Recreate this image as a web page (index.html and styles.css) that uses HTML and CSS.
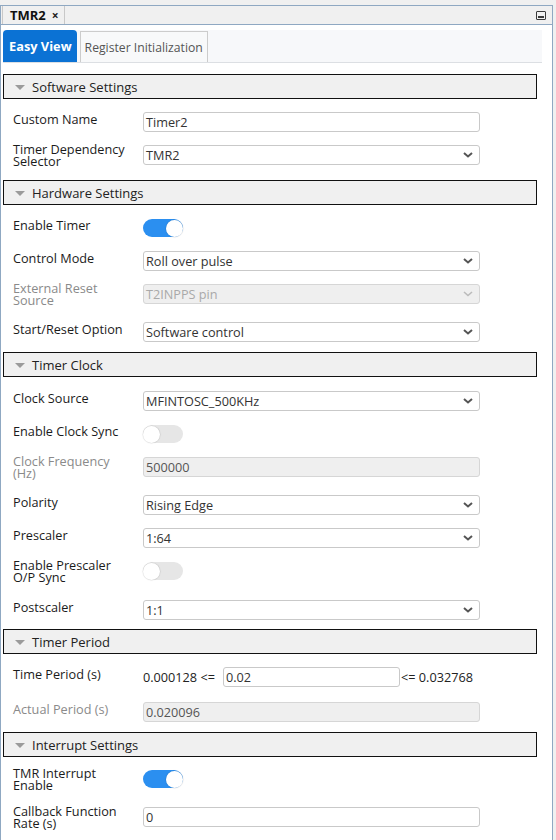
FILE: index.html
```html
<!DOCTYPE html>
<html>
<head>
<meta charset="utf-8">
<link rel="stylesheet" href="styles.css">
</head>
<body>
<div class="topstrip"></div>
<div class="panel">
  <div class="panel-head">
    <div class="doc-tab"><span class="doc-title">TMR2</span><span class="doc-x">×</span></div>
    <div class="min-icon"><span class="min-bar"></span></div>
  </div>
  <div class="panel-body">
    <div class="view-tabs">
      <div class="vtab active">Easy View</div>
      <div class="vtab">Register Initialization</div>
    </div>

    <div class="sec-head"><span class="tri"></span>Software Settings</div>
    <div class="row first">
      <div class="label">Custom Name</div>
      <div class="field">Timer2</div>
    </div>
    <div class="row two">
      <div class="label">Timer Dependency<br>Selector</div>
      <div class="field select">TMR2<svg class="chev" width="10" height="6" viewBox="0 0 10 6"><path d="M1 1l4 3.5L9 1" fill="none" stroke="#555" stroke-width="2"/></svg></div>
    </div>

    <div class="sec-head"><span class="tri"></span>Hardware Settings</div>
    <div class="row first">
      <div class="label">Enable Timer</div>
      <div class="toggle on"><span class="knob"></span></div>
    </div>
    <div class="row">
      <div class="label">Control Mode</div>
      <div class="field select">Roll over pulse<svg class="chev" width="10" height="6" viewBox="0 0 10 6"><path d="M1 1l4 3.5L9 1" fill="none" stroke="#555" stroke-width="2"/></svg></div>
    </div>
    <div class="row two">
      <div class="label dis">External Reset<br>Source</div>
      <div class="field select disabled light">T2INPPS pin<svg class="chev" width="10" height="6" viewBox="0 0 10 6"><path d="M1 1l4 3.5L9 1" fill="none" stroke="#bbb" stroke-width="1.6"/></svg></div>
    </div>
    <div class="row">
      <div class="label">Start/Reset Option</div>
      <div class="field select">Software control<svg class="chev" width="10" height="6" viewBox="0 0 10 6"><path d="M1 1l4 3.5L9 1" fill="none" stroke="#555" stroke-width="2"/></svg></div>
    </div>

    <div class="sec-head"><span class="tri"></span>Timer Clock</div>
    <div class="row first m14">
      <div class="label">Clock Source</div>
      <div class="field select">MFINTOSC_500KHz<svg class="chev" width="10" height="6" viewBox="0 0 10 6"><path d="M1 1l4 3.5L9 1" fill="none" stroke="#555" stroke-width="2"/></svg></div>
    </div>
    <div class="row">
      <div class="label">Enable Clock Sync</div>
      <div class="toggle"><span class="knob"></span></div>
    </div>
    <div class="row two">
      <div class="label dis">Clock Frequency<br>(Hz)</div>
      <div class="field disabled">500000</div>
    </div>
    <div class="row">
      <div class="label">Polarity</div>
      <div class="field select">Rising Edge<svg class="chev" width="10" height="6" viewBox="0 0 10 6"><path d="M1 1l4 3.5L9 1" fill="none" stroke="#555" stroke-width="2"/></svg></div>
    </div>
    <div class="row">
      <div class="label">Prescaler</div>
      <div class="field select">1:64<svg class="chev" width="10" height="6" viewBox="0 0 10 6"><path d="M1 1l4 3.5L9 1" fill="none" stroke="#555" stroke-width="2"/></svg></div>
    </div>
    <div class="row two">
      <div class="label">Enable Prescaler<br>O/P Sync</div>
      <div class="toggle"><span class="knob"></span></div>
    </div>
    <div class="row m14">
      <div class="label">Postscaler</div>
      <div class="field select">1:1<svg class="chev" width="10" height="6" viewBox="0 0 10 6"><path d="M1 1l4 3.5L9 1" fill="none" stroke="#555" stroke-width="2"/></svg></div>
    </div>

    <div class="sec-head m9"><span class="tri"></span>Timer Period</div>
    <div class="row first">
      <div class="label">Time Period (s)</div>
      <div class="range">
        <span class="bound">0.000128 &lt;=</span>
        <div class="field short">0.02</div>
        <span class="bound right">&lt;= 0.032768</span>
      </div>
    </div>
    <div class="row ap">
      <div class="label dis">Actual Period (s)</div>
      <div class="field disabled">0.020096</div>
    </div>

    <div class="sec-head"><span class="tri"></span>Interrupt Settings</div>
    <div class="row first two m12">
      <div class="label">TMR Interrupt<br>Enable</div>
      <div class="toggle on"><span class="knob"></span></div>
    </div>
    <div class="row two">
      <div class="label">Callback Function<br>Rate (s)</div>
      <div class="field">0</div>
    </div>
  </div>
</div>
</body>
</html>
```
FILE: styles.css
```css
html, body {
  margin: 0;
  padding: 0;
  background: #ffffff;
}
body {
  font-family: "Open Sans", "Noto Sans", "DejaVu Sans", sans-serif;
  font-size: 12.7px;
  color: #1b1b1b;
  width: 556px;
  height: 840px;
  overflow: hidden;
  background: #f0f0f0;
}
.topstrip {
  height: 5px;
  background: #f0f0f0;
}
.panel {
  width: 551px;
  height: 840px;
  border: 1px solid #8fa8c2;
  border-bottom: none;
  background: #ffffff;
}
.panel-head {
  height: 18px;
  background: #f0f0f0;
  border-bottom: 1px solid #8fa8c2;
  display: flex;
  align-items: stretch;
  justify-content: space-between;
}
.doc-tab {
  margin-left: 1px;
  border-left: 1px solid #c8c8c8;
  border-right: 1px solid #c8c8c8;
  background: #f0f0f0;
  display: flex;
  align-items: center;
  padding: 0 5px 0 7px;
  gap: 6px;
}
.doc-title {
  font-weight: 700;
  font-size: 13px;
  color: #111;
}
.doc-x {
  font-weight: 700;
  font-size: 12px;
  color: #222;
}
.min-icon {
  width: 8px;
  height: 7px;
  border: 1.5px solid #3a3a3a;
  border-radius: 1px;
  margin: 5px 6px 0 0;
  display: flex;
  align-items: flex-end;
  justify-content: center;
  box-sizing: content-box;
}
.min-bar {
  width: 6px;
  height: 2px;
  background: #3a3a3a;
  margin-bottom: 1px;
}
.panel-body {
  padding-top: 5px;
}
.view-tabs {
  margin-left: 2px;
  width: 539px;
  height: 32px;
  background: #f7f8fa;
  border-bottom: 1px solid #dcdfe3;
  display: flex;
  align-items: flex-end;
}
.vtab {
  height: 30px;
  display: flex;
  align-items: center;
  padding: 0 4px;
  font-size: 12.2px;
  color: #555;
  background: #f8f9fa;
  border: 1px solid #cccccc;
  border-bottom: none;
  margin-left: 3px;
}
.vtab.active {
  height: 32px;
  margin-left: 0;
  padding: 0 5px 0 6px;
  border: none;
  background: #0b72d4;
  color: #ffffff;
  font-weight: 700;
  font-size: 12.8px;
  border-radius: 4px 4px 0 0;
}
.sec-head {
  margin: 11px 0 0 2px;
  width: 532px;
  height: 23px;
  border: 1px solid #111111;
  background: #f0f0f0;
  display: flex;
  align-items: center;
  font-size: 13px;
  color: #222;
}
.tri {
  width: 0;
  height: 0;
  border-left: 5px solid transparent;
  border-right: 5px solid transparent;
  border-top: 5px solid #9a9a9a;
  margin: 1px 7px 0 11px;
}
.row {
  display: flex;
  align-items: flex-start;
  margin-top: 13px;
  margin-left: 12px;
  height: 20px;
}
.row.two {
  height: 25px;
}
.label {
  width: 130px;
  flex: none;
  line-height: 14px;
  color: #1b1b1b;
}
.row.two .label {
  line-height: 12px;
  margin-top: -2px;
}
.label.dis {
  color: #8a8a8a;
}
.field {
  box-sizing: border-box;
  width: 337px;
  height: 20px;
  border: 1px solid #c9c9c9;
  border-radius: 3px;
  background: #ffffff;
  display: flex;
  align-items: center;
  justify-content: space-between;
  padding: 0 6px 0 2px;
  color: #333;
  line-height: 18px;
}
.field.disabled {
  background: #efefef;
  border-color: #d6d6d6;
  color: #555;
}
.field.light {
  color: #a9a9a9;
}
.chev {
  display: block;
}
.toggle {
  margin-top: 1px;
  width: 40px;
  height: 18px;
  border-radius: 9px;
  background: #e6e6e6;
  display: flex;
  align-items: center;
  justify-content: flex-start;
}
.toggle.on {
  background: #2b8ff0;
  justify-content: flex-end;
}
.knob {
  width: 17px;
  height: 17px;
  border-radius: 50%;
  background: #ffffff;
  box-shadow: 0 0 1px 0.5px rgba(0,0,0,0.14);
}
.range {
  display: flex;
  align-items: center;
  height: 20px;
}
.bound {
  color: #222;
  width: 80px;
  white-space: nowrap;
}
.bound.right {
  width: auto;
  margin-left: 1px;
}
.field.short {
  width: 177px;
  padding-right: 2px;
}
.row.ap {
  margin-top: 15px;
}
.row + .sec-head {
  margin-top: 10px;
}
.row + .sec-head.m9 {
  margin-top: 9px;
}
.row.m14 {
  margin-top: 14px;
}
.row.m12 {
  margin-top: 12px;
}
```
